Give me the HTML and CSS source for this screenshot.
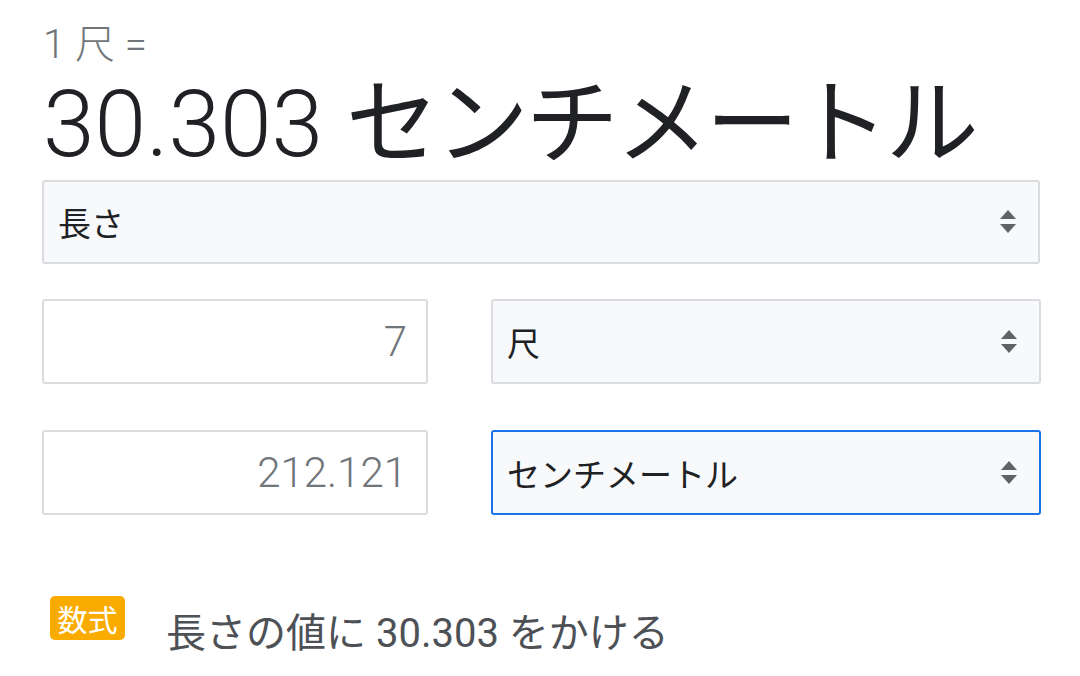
FILE: index.html
```html
<!DOCTYPE html>
<html lang="ja">
<head>
    <meta charset="UTF-8">
    <meta name="viewport" content="width=device-width, initial-scale=1.0">
    <title>単位換算</title>
    <link rel="stylesheet" href="styles.css">
</head>
<body>
    <div class="converter">
        <div class="src-line">1 尺 =</div>
        <div class="result">30.303 <span class="unit">センチメートル</span></div>

        <div class="picker wide">
            <span>長さ</span>
            <svg class="arrows" width="20" height="28" viewBox="0 0 20 28"><path d="M10 2 L18 11 L2 11 Z"/><path d="M2 16 L18 16 L10 25 Z"/></svg>
        </div>

        <div class="row first">
            <div class="value">7</div>
            <div class="picker">
                <span>尺</span>
                <svg class="arrows" width="20" height="28" viewBox="0 0 20 28"><path d="M10 2 L18 11 L2 11 Z"/><path d="M2 16 L18 16 L10 25 Z"/></svg>
            </div>
        </div>

        <div class="row">
            <div class="value">212.121</div>
            <div class="picker active">
                <span>センチメートル</span>
                <svg class="arrows" width="20" height="28" viewBox="0 0 20 28"><path d="M10 2 L18 11 L2 11 Z"/><path d="M2 16 L18 16 L10 25 Z"/></svg>
            </div>
        </div>

        <div class="formula">
            <span class="badge">数式</span>
            <span class="formula-text">長さの値に 30.303 をかける</span>
        </div>
    </div>
</body>
</html>
```

FILE: styles.css
```css
body {
    margin: 0;
    background: #fff;
    font-family: Roboto, "Noto Sans CJK JP", sans-serif;
}

.converter {
    width: 998px;
    padding: 21px 0 0 42px;
}

.src-line {
    font-size: 40px;
    font-weight: 300;
    line-height: 48px;
    color: #70757a;
    padding-left: 1px;
}

.result {
    font-size: 93px;
    font-weight: 300;
    line-height: 111px;
    color: #202124;
    padding-left: 1px;
    white-space: nowrap;
}

.result .unit {
    font-weight: 400;
    letter-spacing: -3px;
}

.picker {
    box-sizing: border-box;
    height: 84px;
    display: flex;
    align-items: center;
    justify-content: space-between;
    padding: 0 20px 0 14px;
    background: #f8f9fa;
    border: 2px solid #dadce0;
    border-radius: 3px;
    font-size: 33px;
    color: #202124;
}

.picker.active {
    border-color: #1a73e8;
}

.arrows {
    fill: #5f6368;
}

.row {
    display: grid;
    grid-template-columns: 386px 550px;
    column-gap: 63px;
    margin-top: 46px;
}

.row.first {
    margin-top: 35px;
}

.row .picker,
.value {
    height: 85px;
}

.value {
    box-sizing: border-box;
    display: flex;
    align-items: center;
    justify-content: flex-end;
    padding-right: 19px;
    border: 2px solid #dadce0;
    border-radius: 3px;
    font-size: 42px;
    font-weight: 300;
    color: #70757a;
}

.formula {
    display: flex;
    align-items: center;
    margin-top: 74px;
    padding-left: 8px;
}

.badge {
    width: 75px;
    height: 44px;
    display: flex;
    align-items: center;
    justify-content: center;
    background: #f9ab00;
    border-radius: 5px;
    color: #fff;
    font-size: 30px;
    margin-top: -12px;
}

.formula-text {
    margin-left: 41px;
    font-size: 40px;
    color: #4d5156;
    margin-top: 12px;
}
```
